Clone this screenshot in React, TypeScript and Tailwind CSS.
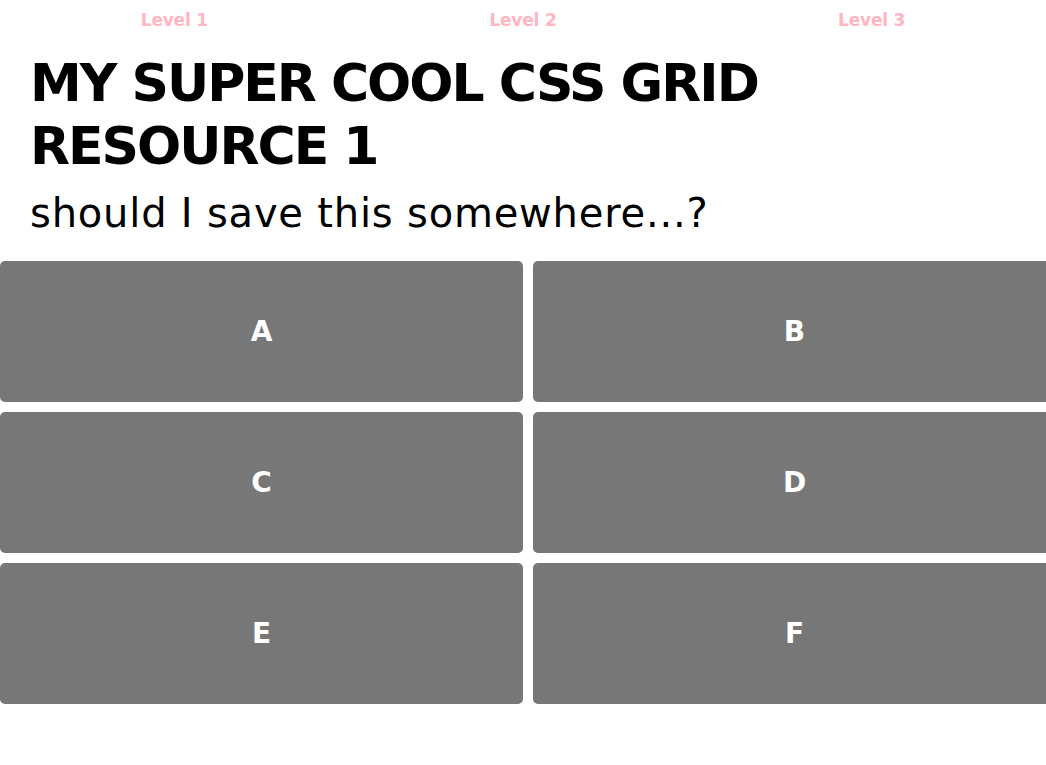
import React from "react"

const levels = ["Level 1", "Level 2", "Level 3"]
const cells = ["A", "B", "C", "D", "E", "F"]

export default function App() {
  return (
    <div className="w-full min-h-screen overflow-hidden bg-white text-black font-['DejaVu_Sans',sans-serif]">
      {/* Nav */}
      <nav className="grid grid-cols-3 h-[42px] items-center">
        {levels.map((l) => (
          <a
            key={l}
            href="#"
            className="text-center text-[17px] font-bold text-[#ffb6c1] tracking-[-0.2px]"
          >
            {l}
          </a>
        ))}
      </nav>

      {/* Header */}
      <header className="px-[30px] pt-[10px]">
        <h1 className="max-w-[780px] text-[52px] leading-[63px] font-bold tracking-[-2px]">
          MY SUPER COOL CSS GRID RESOURCE 1
        </h1>
        <p className="mt-[11px] text-[40px] leading-[48px] tracking-[0.8px]">
          should I save this somewhere...?
        </p>
      </header>

      {/* Grid */}
      <div className="mt-[24px] grid grid-cols-[50%_50%] auto-rows-[141px] gap-[10px]">
        {cells.map((c) => (
          <div
            key={c}
            className="flex items-center justify-center rounded-[5px] bg-[#777777] text-white text-[28px] font-bold"
          >
            {c}
          </div>
        ))}
      </div>
    </div>
  )
}
